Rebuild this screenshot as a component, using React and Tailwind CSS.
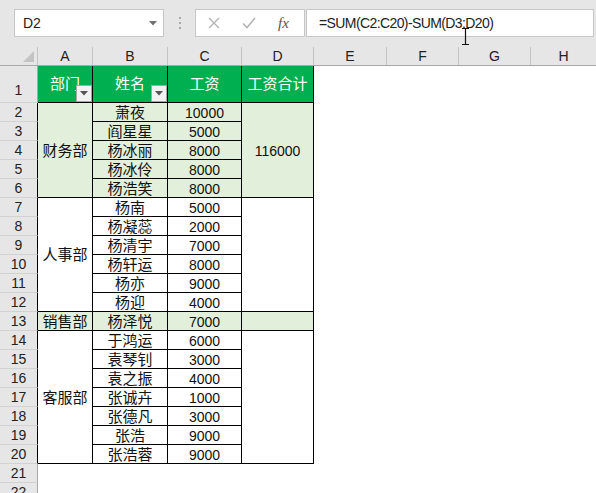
import React from 'react';

const FONT = { fontFamily: '"Liberation Sans", "Noto Sans CJK SC", sans-serif' };

const rows = [
  { n: 2, a: { t: '财务部', span: 'row-span-5' }, b: '萧夜', c: '10000', d: { t: '116000', span: 'row-span-5' }, g: true },
  { n: 3, b: '阎星星', c: '5000', g: true },
  { n: 4, b: '杨冰丽', c: '8000', g: true },
  { n: 5, b: '杨冰伶', c: '8000', g: true },
  { n: 6, b: '杨浩笑', c: '8000', g: true },
  { n: 7, a: { t: '人事部', span: 'row-span-6' }, b: '杨南', c: '5000', d: { t: '', span: 'row-span-6' } },
  { n: 8, b: '杨凝蕊', c: '2000' },
  { n: 9, b: '杨清宇', c: '7000' },
  { n: 10, b: '杨轩运', c: '8000' },
  { n: 11, b: '杨亦', c: '9000' },
  { n: 12, b: '杨迎', c: '4000' },
  { n: 13, a: { t: '销售部', span: 'row-span-1' }, b: '杨泽悦', c: '7000', d: { t: '', span: 'row-span-1' }, g: true },
  { n: 14, a: { t: '客服部', span: 'row-span-7' }, b: '于鸿运', c: '6000', d: { t: '', span: 'row-span-7' } },
  { n: 15, b: '袁琴钊', c: '3000' },
  { n: 16, b: '袁之振', c: '4000' },
  { n: 17, b: '张诚卉', c: '1000' },
  { n: 18, b: '张德凡', c: '3000' },
  { n: 19, b: '张浩', c: '9000' },
  { n: 20, b: '张浩蓉', c: '9000' },
];

const cols = [
  { l: 'A', w: 'w-[55px]' },
  { l: 'B', w: 'w-[75px]' },
  { l: 'C', w: 'w-[74px]' },
  { l: 'D', w: 'w-[72px]' },
  { l: 'E', w: 'w-[73px]' },
  { l: 'F', w: 'w-[72px]' },
  { l: 'G', w: 'w-[72px]' },
];

function FilterButton() {
  return (
    <div className="absolute right-0 bottom-0 w-[16px] h-[17px] bg-[#f2f2f2] border border-[#a6a6a6] flex items-center justify-center">
      <svg width="8" height="5" viewBox="0 0 8 5">
        <path d="M0 0h8L4 4.5z" fill="#555" />
      </svg>
    </div>
  );
}

function Cell({ children, green, span = '' }) {
  // numbers sit a touch smaller than the chinese text
  const isNum = /^\d+$/.test(children);
  return (
    <div
      className={`${span} border-r border-b border-black flex items-center justify-center pt-[2px] text-[#111] ${
        isNum ? 'text-[14px]' : 'text-[15px]'
      } ${green ? 'bg-[#e2efda]' : 'bg-white'}`}
    >
      {children}
    </div>
  );
}

export default function App() {
  const rowNums = [1, ...rows.map((r) => r.n), 21, 22];

  return (
    <div className="w-[596px] h-[493px] overflow-hidden bg-white relative select-none" style={FONT}>
      {/* formula bar */}
      <div className="h-[47px] bg-[#e6e6e6] flex items-start pt-[9px] pl-[14px]">
        <div className="w-[150px] h-[28px] bg-white border border-[#c6c6c6] flex items-center justify-between pl-[8px] pr-[6px] text-[14px] text-[#222]">
          <span>D2</span>
          <svg width="8" height="5" viewBox="0 0 8 5">
            <path d="M0 0h8L4 4.5z" fill="#707070" />
          </svg>
        </div>
        <div className="w-[31px] h-[28px] flex flex-col items-center justify-center gap-[3px]">
          <span className="w-[2px] h-[2px] bg-[#a8a8a8]" />
          <span className="w-[2px] h-[2px] bg-[#a8a8a8]" />
          <span className="w-[2px] h-[2px] bg-[#a8a8a8]" />
        </div>
        <div className="w-[110px] h-[28px] bg-white border border-[#c6c6c6] flex items-center">
          <div className="w-[35px] flex justify-center">
            <svg width="12" height="12" viewBox="0 0 12 12">
              <path d="M1 1l10 10M11 1L1 11" stroke="#b4b4b4" strokeWidth="1.4" />
            </svg>
          </div>
          <div className="w-[35px] flex justify-center">
            <svg width="14" height="12" viewBox="0 0 14 12">
              <path d="M1 6.5l4 4L13 1" stroke="#b4b4b4" strokeWidth="1.6" fill="none" />
            </svg>
          </div>
          <div className="w-[35px] flex justify-center">
            <span className="italic text-[15px] text-[#555]" style={{ fontFamily: '"Liberation Serif", serif' }}>
              fx
            </span>
          </div>
        </div>
        <div className="ml-[1px] mr-[2px] flex-1 h-[28px] bg-white border border-[#c6c6c6] flex items-center pl-[12px] text-[14px] tracking-[-0.6px] text-[#222]">
          =SUM(C2:C20)-SUM(D3:D20)
        </div>
      </div>

      {/* column headers */}
      <div className="h-[19px] bg-[#e6e6e6] border-b border-[#a8a8a8] flex text-[14px] text-[#222]">
        <div className="w-[38px] border-r border-[#c4c4c4] relative">
          <svg className="absolute left-[23px] top-[4px]" width="11" height="11" viewBox="0 0 11 11">
            <path d="M11 0v11H0z" fill="#c4c4c4" />
          </svg>
        </div>
        {cols.map((c) => (
          <div key={c.l} className={`${c.w} border-r border-[#c4c4c4] flex items-center justify-center`}>
            {c.l}
          </div>
        ))}
        <div className="flex-1 flex items-center justify-center">H</div>
      </div>

      {/* sheet */}
      <div className="flex">
        <div className="w-[38px] flex flex-col bg-[#e6e6e6] text-[14px] text-[#222]">
          {rowNums.map((n) => (
            <div
              key={n}
              className={`${n === 1 ? 'h-[37px] items-end pb-[1px]' : 'h-[19px] items-center pt-[1px]'} ${
                n >= 2 && n <= 20 ? 'border-r-black' : 'border-r-[#a8a8a8]'
              } border-r border-b border-b-[#d2d2d2] flex justify-center`}
            >
              {n}
            </div>
          ))}
        </div>

        <div className="grid grid-cols-[55px_75px_74px_72px] grid-rows-[37px] auto-rows-[19px] self-start">
          {['部门', '姓名', '工资', '工资合计'].map((h, i) => (
            <div
              key={h}
              className="relative bg-[#00b050] border-r border-b border-black flex items-center justify-center text-[15px] text-white"
            >
              {h}
              {i < 2 && <FilterButton />}
            </div>
          ))}
          {rows.map((r) => (
            <React.Fragment key={r.n}>
              {r.a && (
                <Cell span={r.a.span} green={r.g}>
                  {r.a.t}
                </Cell>
              )}
              <Cell green={r.g}>{r.b}</Cell>
              <Cell green={r.g}>{r.c}</Cell>
              {r.d && (
                <Cell span={r.d.span} green={r.g}>
                  {r.d.t}
                </Cell>
              )}
            </React.Fragment>
          ))}
        </div>
        <div className="flex-1" />
      </div>

      {/* text cursor */}
      <svg className="absolute left-[461px] top-[28px]" width="9" height="17" viewBox="0 0 9 17">
        <path d="M1 0.5h7M1 16.5h7M4.5 0.5v16" stroke="#111" strokeWidth="1.2" fill="none" />
      </svg>
    </div>
  );
}
